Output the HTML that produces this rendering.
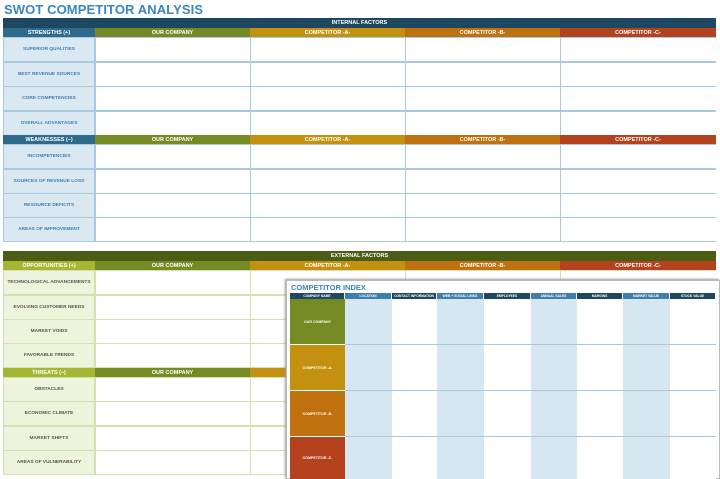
<!DOCTYPE html>
<html><head><meta charset="utf-8"><style>
*{margin:0;padding:0;box-sizing:border-box}
body{width:720px;height:479px;background:#fff;position:relative;overflow:hidden;font-family:"Liberation Sans",Arial,sans-serif}
.a{position:absolute}
.h{position:absolute;color:#fff;font-weight:bold;font-size:5.5px;text-align:center;display:flex;align-items:center;justify-content:center}
.l{position:absolute;font-size:4.8px;font-weight:bold;display:flex;align-items:center;justify-content:center;text-align:center}
.c{position:absolute;background:#fff}
</style></head><body>
<div class="a" style="left:4px;top:2px;font-size:13px;font-weight:bold;color:#3a86c0;letter-spacing:0.1px">SWOT COMPETITOR ANALYSIS</div>

<div class="a" style="left:3px;top:18px;width:713px;height:224px;background:#a9c9df"></div>
<div class="h" style="left:3px;top:18px;width:713px;height:10px;background:#1e4862">INTERNAL FACTORS</div>
<div class="h" style="left:3px;top:28px;width:92px;height:9px;background:#2e6a8c">STRENGTHS (+)</div>
<div class="h" style="left:95px;top:28px;width:155px;height:9px;background:#768a23">OUR COMPANY</div>
<div class="h" style="left:250px;top:28px;width:155px;height:9px;background:#c4900f">COMPETITOR -A-</div>
<div class="h" style="left:405px;top:28px;width:155px;height:9px;background:#bf710f">COMPETITOR -B-</div>
<div class="h" style="left:560px;top:28px;width:156px;height:9px;background:#b4421f">COMPETITOR -C-</div>
<div class="h" style="left:3px;top:135px;width:92px;height:9px;background:#2e6a8c">WEAKNESSES (–)</div>
<div class="h" style="left:95px;top:135px;width:155px;height:9px;background:#768a23">OUR COMPANY</div>
<div class="h" style="left:250px;top:135px;width:155px;height:9px;background:#c4900f">COMPETITOR -A-</div>
<div class="h" style="left:405px;top:135px;width:155px;height:9px;background:#bf710f">COMPETITOR -B-</div>
<div class="h" style="left:560px;top:135px;width:156px;height:9px;background:#b4421f">COMPETITOR -C-</div>

<div class="a" style="left:3px;top:251px;width:713px;height:224px;background:#d6dfb0"></div>
<div class="h" style="left:3px;top:251px;width:713px;height:10px;background:#4b5d14">EXTERNAL FACTORS</div>
<div class="h" style="left:3px;top:261px;width:92px;height:9px;background:#a3b733">OPPORTUNITIES (+)</div>
<div class="h" style="left:95px;top:261px;width:155px;height:9px;background:#768a23">OUR COMPANY</div>
<div class="h" style="left:250px;top:261px;width:155px;height:9px;background:#c4900f">COMPETITOR -A-</div>
<div class="h" style="left:405px;top:261px;width:155px;height:9px;background:#bf710f">COMPETITOR -B-</div>
<div class="h" style="left:560px;top:261px;width:156px;height:9px;background:#b4421f">COMPETITOR -C-</div>
<div class="h" style="left:3px;top:368px;width:92px;height:9px;background:#a3b733">THREATS (–)</div>
<div class="h" style="left:95px;top:368px;width:155px;height:9px;background:#768a23">OUR COMPANY</div>
<div class="h" style="left:250px;top:368px;width:155px;height:9px;background:#c4900f">COMPETITOR -A-</div>

<div id="rows"></div>

<div class="a" style="left:286px;top:280px;width:434px;height:199px;background:#fff;box-shadow:-1px -1px 2px #999;border:1px solid #bbb"></div>
<div class="a" style="left:291px;top:283px;font-size:7.5px;font-weight:bold;color:#3a86c0">COMPETITOR INDEX</div>
<div id="idx"></div>

<script>
var R=document.getElementById('rows'),s='';
var cols=[[95,155],[250,155],[405,155],[560,156]];
function block(tops,labels,lbg,lcol){
 for(var i=0;i<tops.length;i++){var t=tops[i]+1,h=23;
  s+='<div class="l" style="left:4px;top:'+t+'px;width:90px;height:'+h+'px;background:'+lbg+';color:'+lcol+'">'+labels[i]+'</div>';
  cols.forEach(function(c){s+='<div class="c" style="left:'+(c[0]+1)+'px;top:'+t+'px;width:'+(c[1]-1)+'px;height:'+h+'px"></div>';});
 }}
block([37,62,86,111],['SUPERIOR QUALITIES','BEST REVENUE SOURCES','CORE COMPETENCIES','OVERALL ADVANTAGES'],'#dae8f2','#3f7fb0');
block([144,169,193,217],['INCOMPETENCIES','SOURCES OF REVENUE LOSS','RESOURCE DEFICITS','AREAS OF IMPROVEMENT'],'#dae8f2','#3f7fb0');
block([270,295,319,343],['TECHNOLOGICAL ADVANCEMENTS','EVOLVING CUSTOMER NEEDS','MARKET VOIDS','FAVORABLE TRENDS'],'#eef3dc','#555');
block([377,401,426,450],['OBSTACLES','ECONOMIC CLIMATE','MARKET SHIFTS','AREAS OF VULNERABILITY'],'#eef3dc','#555');
R.innerHTML=s;
var I=document.getElementById('idx'),q='';
var xs=[290,345,392,437,484,531,577,623,670,716];
var hn=['COMPANY NAME','LOCATION','CONTACT INFORMATION','WEB + SOCIAL LINKS','EMPLOYEES','ANNUAL SALES','MARGINS','MARKET VALUE','STOCK VALUE'];
for(var j=0;j<9;j++){var bg=(j%2==0)?'#1e4862':'#3d80ae';
 q+='<div class="h" style="left:'+xs[j]+'px;top:293px;width:'+(xs[j+1]-xs[j]-1)+'px;height:6px;font-size:3.3px;background:'+bg+'">'+hn[j]+'</div>';
 if(j>0)q+='<div class="a" style="left:'+xs[j]+'px;top:299px;width:'+(xs[j+1]-xs[j])+'px;height:180px;background:'+(j%2?'#d6e7f2':'#fff')+'"></div>';}
var rt=[299,345,391,437],rc=['#768a23','#c4900f','#bf710f','#b4421f'],rn=['OUR COMPANY','COMPETITOR -A-','COMPETITOR -B-','COMPETITOR -C-'];
for(var k=0;k<4;k++){q+='<div class="h" style="left:290px;top:'+rt[k]+'px;width:55px;height:'+(k<3?45:42)+'px;font-size:3.6px;background:'+rc[k]+'">'+rn[k]+'</div>';
 if(k>0)q+='<div class="a" style="left:345px;top:'+(rt[k]-1)+'px;width:371px;height:1px;background:#a9c9df"></div>';}
I.innerHTML=q;
</script>
</body></html>
